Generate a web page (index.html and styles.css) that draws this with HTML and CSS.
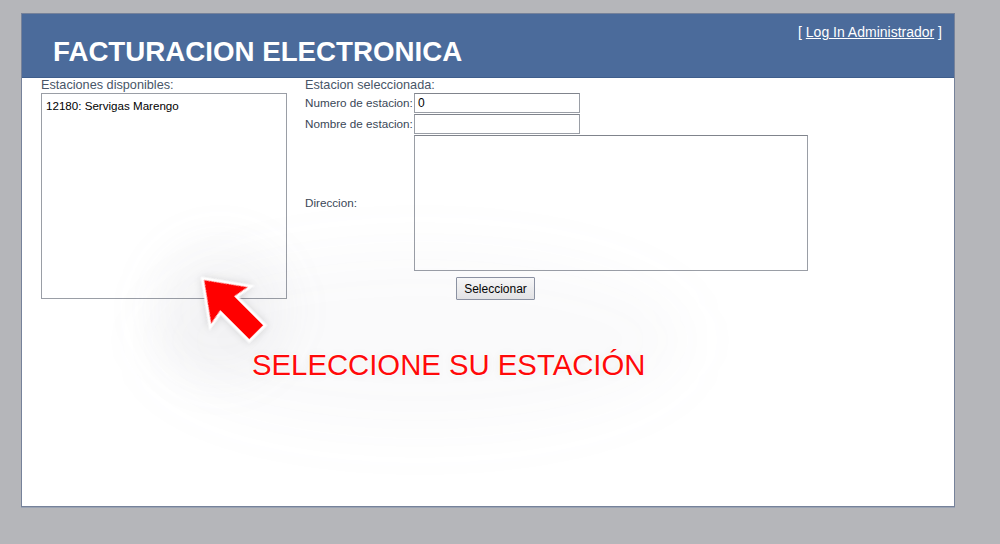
FILE: index.html
```html
<!DOCTYPE html>
<html lang="es">
<head>
<meta charset="utf-8">
<title>Facturacion Electronica</title>
<link rel="stylesheet" href="styles.css">
</head>
<body>
<div class="frame">
  <header class="header">
    <h1 class="title">FACTURACION ELECTRONICA</h1>
    <div class="login">[ <a href="#" class="login-link">Log In Administrador</a> ]</div>
  </header>
  <main class="content">
    <section class="col-left">
      <div class="caption">Estaciones disponibles:</div>
      <div class="listbox">
        <div class="option">12180: Servigas Marengo</div>
      </div>
    </section>
    <section class="col-right">
      <div class="caption">Estacion seleccionada:</div>
      <div class="form">
        <label class="flabel">Numero de estacion:</label>
        <div class="field small">0</div>
        <label class="flabel">Nombre de estacion:</label>
        <div class="field small"></div>
        <label class="flabel">Direccion:</label>
        <div class="field area"></div>
      </div>
      <div class="actions"><button class="btn">Seleccionar</button></div>
    </section>
  </main>
</div>
<div class="glow"></div>
<div class="glow-arrow"></div>
<svg class="arrow" width="1000" height="544" viewBox="0 0 1000 544" aria-hidden="true">
  <defs>
    <filter id="sh" x="-50%" y="-50%" width="200%" height="200%">
      <feGaussianBlur in="SourceAlpha" stdDeviation="4"/>
      <feComponentTransfer><feFuncA type="linear" slope="0.15"/></feComponentTransfer>
      <feMerge><feMergeNode/><feMergeNode in="SourceGraphic"/></feMerge>
    </filter>
  </defs>
  <g transform="translate(204 280) rotate(-45)" filter="url(#sh)">
    <polygon points="0,0 26,36 10,33 10,74 -10,74 -10,33 -26,36" fill="#ff0000" stroke="#ffffff" stroke-width="5" stroke-linejoin="miter"/>
    <polygon points="0,0 26,36 10,33 10,74 -10,74 -10,33 -26,36" fill="#ff0000"/>
  </g>
</svg>
<div class="callout">SELECCIONE SU ESTACIÓN</div>
</body>
</html>
```
FILE: styles.css
```css
html, body {
  margin: 0;
  padding: 0;
}
body {
  background: #b5b6ba;
  width: 1000px;
  height: 544px;
  overflow: hidden;
  position: relative;
  font-family: "Liberation Sans", Arial, sans-serif;
}
.frame {
  margin: 13px 0 0 21px;
  width: 932px;
  height: 492px;
  background: #ffffff;
  border: 1px solid #76829a;
  box-shadow: 0 1px 0 #9aa3b3;
}
.header {
  height: 63px;
  background: #4b6b9b;
  border-bottom: 1px solid #3f5e8c;
  display: flex;
  justify-content: space-between;
  align-items: flex-start;
}
.title {
  margin: 0;
  padding: 22px 0 0 31px;
  font-size: 27.7px;
  line-height: 32px;
  font-weight: bold;
  color: #ffffff;
}
.login {
  padding: 10px 12px 0 0;
  font-size: 14px;
  line-height: 16px;
  color: #ffffff;
}
.login-link {
  color: #ffffff;
  text-decoration: underline;
}
.content {
  display: flex;
  padding: 0 0 0 19px;
  gap: 18px;
}
.caption {
  font-size: 12.7px;
  line-height: 15px;
  color: #485668;
}
.col-left {
  width: 246px;
}
.listbox {
  box-sizing: border-box;
  width: 246px;
  height: 206px;
  border: 1px solid #9a9ea6;
  padding: 5px 4px;
}
.option {
  font-size: 11.6px;
  line-height: 14px;
  color: #000000;
}
.col-right {
  display: flex;
  flex-direction: column;
}
.form {
  display: grid;
  grid-template-columns: 109px auto;
  row-gap: 1px;
  align-items: center;
}
.flabel {
  font-size: 11.7px;
  color: #3a4757;
  line-height: 14px;
}
.field {
  box-sizing: border-box;
  border: 1px solid #9a9ea6;
  border-top-color: #80848c;
  background: #ffffff;
  font-size: 12px;
  color: #000;
  padding: 2px 3px;
  line-height: 14px;
}
.field.small {
  width: 166px;
  height: 20px;
}
.field.area {
  width: 394px;
  height: 136px;
}
.actions {
  padding: 6px 0 0 151px;
}
.btn {
  box-sizing: border-box;
  width: 79px;
  height: 23px;
  font-family: "Liberation Sans", Arial, sans-serif;
  font-size: 12px;
  color: #000;
  background: linear-gradient(#fbfbfb, #e6e6e8);
  border: 1px solid #8c93a3;
  border-radius: 1px;
  padding: 0;
}
.glow {
  position: absolute;
  left: 150px;
  top: 250px;
  width: 540px;
  height: 180px;
  border-radius: 50%;
  background: rgba(120,125,135,0.035);
  filter: blur(30px);
  pointer-events: none;
}
.glow-arrow {
  position: absolute;
  left: 150px;
  top: 240px;
  width: 140px;
  height: 140px;
  border-radius: 50%;
  background: rgba(120,125,135,0.06);
  filter: blur(22px);
  pointer-events: none;
}
.arrow {
  position: absolute;
  left: 0;
  top: 0;
  pointer-events: none;
}
.callout {
  position: absolute;
  left: 252px;
  top: 350px;
  font-size: 29.3px;
  line-height: 29px;
  color: #ff0a0a;
  white-space: nowrap;
  text-shadow: 0 0 2px #ffffff, 0 0 2px #ffffff, 0 0 3px #ffffff, 0 0 10px rgba(0,0,0,0.08);
}
```
